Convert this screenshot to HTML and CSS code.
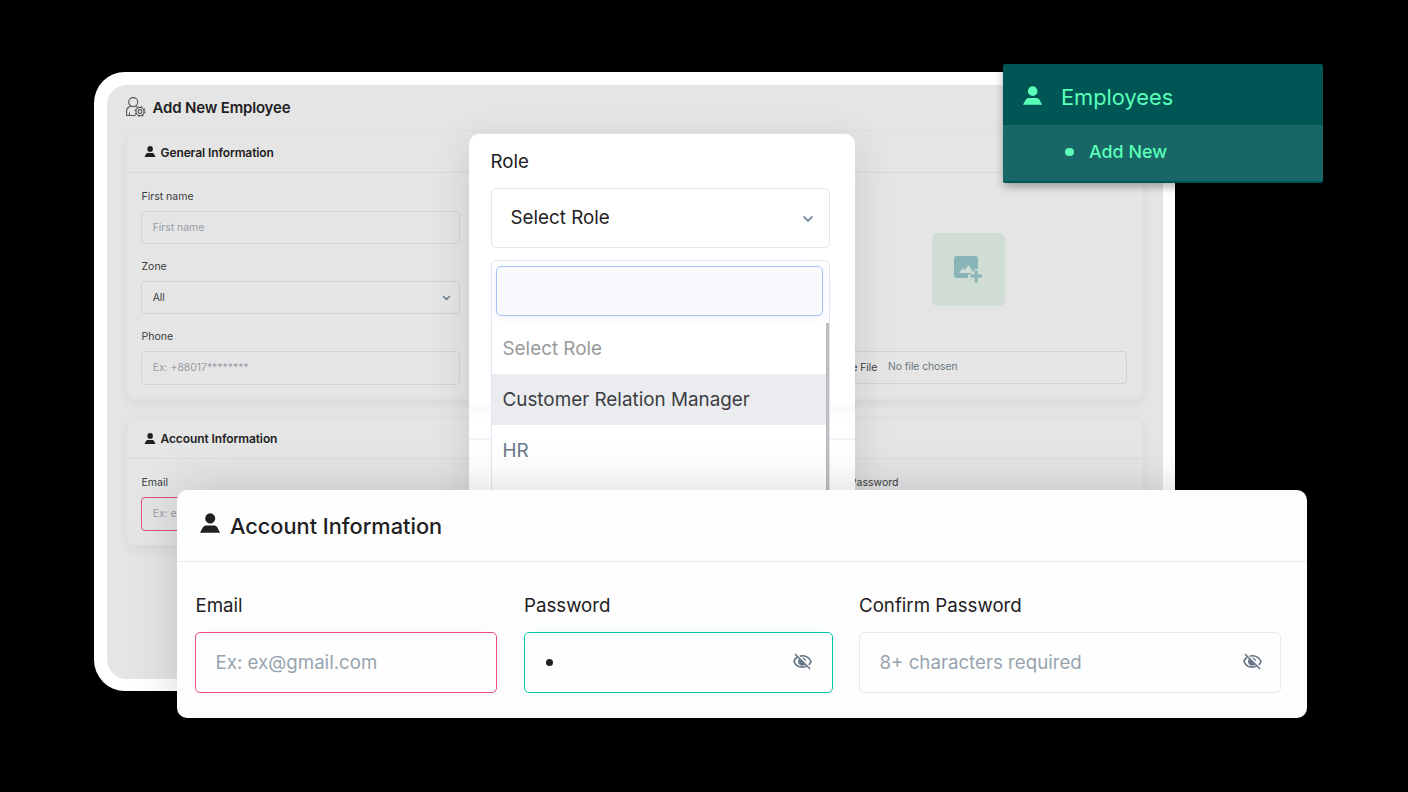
FILE: index.html
```html
<!DOCTYPE html>
<html lang="en">
<head>
<meta charset="utf-8">
<title>Add New Employee</title>
<link rel="stylesheet" href="styles.css">
</head>
<body>
<svg class="defs" width="0" height="0">
  <symbol id="person" viewBox="0 0 20 20"><ellipse cx="10.2" cy="5.400" rx="5" ry="5.200"/><path d="M0 19.800 2.800 14.600Q3.800 12.500 6 12.500h8.200q2.200 0 3.200 2l2.600 5.300z"/></symbol>
  <symbol id="chevron" viewBox="0 0 12 8"><path d="M1.500 1.500 6 5.800 10.500 1.500" fill="none" stroke="currentColor" stroke-width="2"/></symbol>
  <symbol id="eye-off" viewBox="0 0 20 18"><g fill="none" stroke="currentColor" stroke-width="1.700"><path d="M2 1l16 16"/><path d="M4.500 4.200C2.200 5.800 1.200 7.800 1 9c1.300 3.700 4.800 6 9 6 1.700 0 3.200-.4 4.500-1.100M7.200 3.300C12 2 17.500 4.300 19 9c-.5 1.500-1.300 2.600-2.400 3.500"/></g><path d="M6.500 5.800a4.300 4.300 0 0 0 6.600 6.300zM9.500 4.900a4 4 0 0 1 4.400 4.300z" fill="currentColor"/></symbol>
</svg>
<main class="stage">
  <section class="device">
    <div class="screen">
      <header class="page-head">
        <svg class="head-icon" viewBox="0 0 20 20"><g fill="none" stroke="#555" stroke-width="1.100"><circle cx="7.200" cy="5.100" r="4.500"/><path d="M9.500 18.500H.6v-4.700Q.9 10.300 4.700 9.400M9.400 9.400l1.600.6M3.500 18v-2.500"/><circle cx="14" cy="14.500" r="1.900"/><circle cx="14" cy="14.500" r="4"/></g><circle cx="14" cy="14.500" r="4.900" fill="none" stroke="#555" stroke-width="1.200" stroke-dasharray="1.900 1.950"/></svg>
        <h1>Add New Employee</h1>
      </header>
      <section class="card general">
        <div class="card-head"><svg class="person"><use href="#person"/></svg><h2>General Information</h2></div>
        <div class="card-body">
          <div class="fields">
            <div class="field"><label>First name</label><div class="input muted">First name</div></div>
            <div class="field"><label>Zone</label><div class="input">All<svg class="chev"><use href="#chevron"/></svg></div></div>
            <div class="field"><label>Phone</label><div class="input muted">Ex: +88017********</div></div>
          </div>
          <div class="upload">
            <div class="tile"><svg viewBox="0 0 28 27"><path d="M3 0h18q3 0 3 3v10h-3.500v2.500H17v3h-3V22H3q-3 0-3-3V3Q0 0 3 0z" fill="#8ab5b8"/><path d="M5 17l4-5 1.800 2.200L14.500 9l4 6v2z" fill="#cfddd5"/><path d="M16.500 20h11.500M22.200 14.500V26.500" stroke="#8ab5b8" stroke-width="3"/></svg></div>
            <div class="input file"><span class="choose">Choose File</span><span class="nofile">No file chosen</span></div>
          </div>
        </div>
      </section>
      <section class="card account">
        <div class="card-head"><svg class="person"><use href="#person"/></svg><h2>Account Information</h2></div>
        <div class="card-body three">
          <div class="field"><label>Email</label><div class="input muted invalid">Ex: ex</div></div>
          <div class="field"><label>Password</label><div class="input"></div></div>
          <div class="field"><label>Confirm Password</label><div class="input"></div></div>
        </div>
      </section>
    </div>
  </section>

  <section class="role-pop">
    <label class="big-label">Role</label>
    <div class="big-select"><span>Select Role</span><svg class="big-chev"><use href="#chevron"/></svg></div>
    <div class="dropdown">
      <div class="search"></div>
      <div class="options">
        <div class="opt placeholder">Select Role</div>
        <div class="opt active">Customer Relation Manager</div>
        <div class="opt">HR</div>
      </div>
    </div>
  </section>

  <section class="account-pop">
    <header><svg class="person"><use href="#person"/></svg><h2>Account Information</h2></header>
    <div class="account-grid">
      <div><label class="big-label">Email</label><div class="big-input invalid">Ex: ex@gmail.com</div></div>
      <div><label class="big-label">Password</label><div class="big-input valid"><i class="bullet"></i><svg class="eye"><use href="#eye-off"/></svg></div></div>
      <div><label class="big-label confirm">Confirm Password</label><div class="big-input last"><span class="required">8+ characters required</span><svg class="eye"><use href="#eye-off"/></svg></div></div>
    </div>
  </section>

  <nav class="menu">
    <div class="menu-main"><svg class="person"><use href="#person"/></svg><span>Employees</span></div>
    <div class="menu-sub"><i></i><span>Add New</span></div>
  </nav>
</main>
</body>
</html>
```

FILE: styles.css
```css
* { box-sizing: border-box; }
body { margin: 0; background: #000; font-family: Inter, "Liberation Sans", sans-serif; color: #1e2022; }
h1, h2 { margin: 0; white-space: nowrap; }
label { display: block; white-space: nowrap; }
svg { display: block; flex: none; }
.defs { position: absolute; }
.stage { position: relative; width: 1408px; height: 792px; overflow: hidden; padding: 72px 0 0 94px; }

.device { width: 1081px; height: 619px; padding: 12.5px; background: #fff; border-radius: 31px; }
.screen { height: 100%; padding: 11.500px 19px; background: #e5e5e5; border-radius: 20px; }
.page-head { display: flex; align-items: center; gap: 7px; height: 22.500px; margin-bottom: 12px; }
.head-icon { width: 20px; height: 20px; }
h1 { padding-top: 1px; font-size: 15px; font-weight: 600; line-height: 20px; letter-spacing: -.17px; }

.card { border: 1px solid #dedfe1; border-radius: 9px; box-shadow: 0 4px 9px rgba(120, 135, 140, .12); }
.general { height: 269px; margin-bottom: 18.500px; }
.account { height: 128px; }
.card-head { display: flex; align-items: center; gap: 5px; height: 41px; padding: 1px 0 0 17px; border-bottom: 1px solid #d9dae1; }
.account .card-head { height: 40px; padding-top: 0; }
.card-head .person { width: 12px; height: 11px; margin-bottom: 1px; }
.card-head h2 { font-size: 12px; font-weight: 600; letter-spacing: -.1px; }
.card-body { display: flex; justify-content: space-between; padding: 16px 15.500px 0 14px; }
.account .card-body { padding-top: 16px; }
.fields { display: grid; gap: 14.800px; width: 319px; }
.field { width: 319px; }
.field label { height: 22px; padding-left: 1px; font-size: 10.500px; line-height: 15px; color: #3a3c40; }
.account .field:last-child label { padding-left: 0; margin-left: -1px; }
.input { display: flex; align-items: center; height: 33.500px; padding: 0 11.200px; border: 1px solid #d0d1dc; border-radius: 4px; font-size: 10.400px; color: #3a3c40; white-space: nowrap; }
.muted { color: #979ca6; }
.input.invalid { border-color: #dc5278; }
.chev { width: 9px; height: 6px; margin-left: auto; margin-right: -4px; color: #71808f; }
.upload { display: flex; flex-direction: column; align-items: center; width: 317px; padding-top: 44px; }
.tile { display: grid; place-items: center; width: 73px; height: 73px; margin-bottom: 45px; background: #cfddd5; border-radius: 6px; }
.tile svg { width: 28px; height: 27px; margin: 1px 2px 0 0; }
.file { width: 317px; padding-left: 9px; font-size: 10.300px; }
.choose { width: 57px; }
.nofile { margin-left: 11px; margin-top: -2px; color: #687780; letter-spacing: -.05px; }

.role-pop { position: absolute; left: 469px; top: 134px; width: 386px; height: 370px; padding: 16px 25px 0 21.500px; border-radius: 10px; background: linear-gradient(#fff 271px, #f8f9fa 271px, #fff 285px, #fff 304px, #f1f2fa 304px, #f1f2fa 306px, #fff 306px); box-shadow: 0 10px 40px rgba(0, 0, 0, .12); }
.big-label { font-size: 18.700px; font-weight: 400; line-height: 24px; color: #1e2022; }
.big-select { display: flex; align-items: center; justify-content: space-between; height: 60px; margin-top: 13.500px; padding: 0 15px 0 19px; border: 1.500px solid #e3e6f3; border-radius: 5px; background: #fff; font-size: 18.800px; }
.big-chev { width: 12px; height: 8px; color: #8495a6; margin-top: 3px; }
.dropdown { height: 240px; margin-top: 12px; padding: 5px 0 0; border: 1.500px solid #e3e6f5; border-radius: 5px 5px 0 0; background: #fff; }
.search { height: 50px; margin: 0 6px 7px 4.500px; border: 1.500px solid #a4c4f8; border-radius: 5px; background: #f8fafd; box-shadow: 0 2px 9px rgba(120, 150, 230, .12); }
.options { height: 180px; border-right: 3px solid #bdbdbd; }
.opt { height: 51px; padding-left: 11px; font-size: 18.850px; line-height: 52px; color: #677788; }
.placeholder { color: #999; }
.active { background: #ebecf0; color: #3b3d43; }

.account-pop { position: absolute; left: 177px; top: 490px; width: 1130px; height: 228px; background: #fefefe; border-radius: 10px; box-shadow: 0 0 48px rgba(0, 0, 0, .16); }
.account-pop header { display: flex; align-items: center; gap: 10px; height: 72px; padding: 1px 0 0 23px; border-bottom: 1px solid #ebecee; }
.account-pop header .person { width: 20px; height: 20px; margin-bottom: 6px; }
.account-pop h2 { font-size: 21.750px; font-weight: 500; }
.account-grid { display: grid; grid-template-columns: 302px 309px 422px; column-gap: 26.500px; padding: 32px 0 0 18px; }
.account-grid .big-label { padding-left: .5px; }
.account-grid .confirm { padding-left: 0; }
.big-input { display: flex; align-items: center; height: 61px; margin-top: 14px; padding: 0 19.500px 0 19.500px; border: 1.500px solid #e7e8f2; border-radius: 5px; font-size: 18.700px; color: #97a4af; }
.big-input.last { padding-right: 18px; }
.big-input.invalid { border-color: #ed4c78; box-shadow: 0 0 12px rgba(237, 76, 120, .05); }
.big-input.valid { border-color: #00c9a7; box-shadow: 0 0 12px rgba(0, 201, 167, .06); }
.bullet { width: 7px; height: 7px; margin: 0 0 0 1.500px; border-radius: 50%; background: #1e2022; }
.eye { width: 19px; height: 17px; margin-left: auto; margin-bottom: 3px; color: #677788; }

.menu { position: absolute; left: 1003px; top: 64px; width: 320px; height: 118.500px; border-radius: 2px; background: #005555; color: #5affb8; box-shadow: 0 4px 9px rgba(0, 0, 0, .3); }
.menu-main { display: flex; align-items: center; height: 61px; padding: 5px 0 0 20px; gap: 19px; font-size: 21.800px; }
.menu-main .person { width: 19px; height: 19px; margin-bottom: 3px; }
.menu-sub { display: flex; align-items: center; height: 56px; padding: 0 0 3px 62px; gap: 15px; background: #196666; font-size: 17.900px; font-weight: 450; }
.menu-sub i { width: 9px; height: 8px; border-radius: 4px; background: #5affb8; }
.person { fill: currentColor; }
```
